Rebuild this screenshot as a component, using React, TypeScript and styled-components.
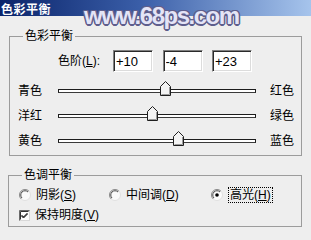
import styled, { createGlobalStyle } from "styled-components";

const GlobalStyle = createGlobalStyle`
  body {
    margin: 0;
    background: #eeeeee;
  }
`;

const balance = [
  { left: "青色", right: "红色", value: 10 },
  { left: "洋红", right: "绿色", value: -4 },
  { left: "黄色", right: "蓝色", value: 23 },
];

const TRACK_WIDTH = 196;

const Thumb = () => (
  <svg width="11" height="15" viewBox="0 0 11 15">
    <path
      d="M5.5 0.5 L10.5 5.5 L10.5 14.5 L0.5 14.5 L0.5 5.5 Z"
      fill="#f3f3f3"
      stroke="#1e1e1e"
    />
    <path d="M1.5 13.5 L9.5 13.5 L9.5 6" fill="none" stroke="#9a9a9a" />
  </svg>
);

const RadioMark = ({ checked }: { checked?: boolean }) => (
  <svg width="12" height="12" viewBox="0 0 12 12">
    <circle cx="6" cy="6" r="5.5" fill="#fbfbfb" stroke="#e0e0e0" />
    <path d="M2.1 9.9 A5.5 5.5 0 0 1 9.9 2.1" fill="none" stroke="#8a8a8a" />
    <path d="M3 9 A4.2 4.2 0 0 1 9 3" fill="none" stroke="#4a4a4a" />
    {checked && <circle cx="6" cy="6" r="1.8" fill="#000" />}
  </svg>
);

const CheckMark = () => (
  <svg width="11" height="11" viewBox="0 0 11 11">
    <rect x="0.5" y="0.5" width="10" height="10" fill="#fff" stroke="#d8d8d8" />
    <path d="M0.5 10.5 V0.5 H10.5" fill="none" stroke="#6a6a6a" />
    <path d="M1.5 9.5 V1.5 H9.5" fill="none" stroke="#333" />
    <path d="M2.5 5 L4.5 7 L8.5 3 M2.5 6 L4.5 8 L8.5 4" fill="none" stroke="#000" />
  </svg>
);

const App = () => {
  return (
    <Window>
      <GlobalStyle />
      <TitleBar>色彩平衡</TitleBar>
      <Watermark>www.68ps.com</Watermark>

      <Group $left={9} $top={13}>
        <Legend>色彩平衡</Legend>
        <LevelRow>
          <LevelLabel>
            色阶(<U>L</U>):
          </LevelLabel>
          <Inputs>
            <Field readOnly value="+10" />
            <Field readOnly value="-4" />
            <Field readOnly value="+23" />
          </Inputs>
        </LevelRow>
        <Sliders>
          {balance.map((row) => (
            <SliderRow key={row.left}>
              <SideLabel>{row.left}</SideLabel>
              <Track>
                <ThumbHolder
                  style={{ left: ((row.value + 100) / 200) * TRACK_WIDTH - 6.5 }}
                >
                  <Thumb />
                </ThumbHolder>
              </Track>
              <SideLabel>{row.right}</SideLabel>
            </SliderRow>
          ))}
        </Sliders>
      </Group>

      <Group $left={8} $top={12}>
        <Legend>色调平衡</Legend>
        <ToneRow>
          <Option $width={90}>
            <RadioMark />
            <span>
              阴影(<U>S</U>)
            </span>
          </Option>
          <Option $width={102}>
            <RadioMark />
            <span>
              中间调(<U>D</U>)
            </span>
          </Option>
          <Option>
            <RadioMark checked />
            <Focused>
              高光(<U>H</U>)
            </Focused>
          </Option>
        </ToneRow>
        <CheckRow>
          <Option>
            <CheckMark />
            <span>
              保持明度(<U>V</U>)
            </span>
          </Option>
        </CheckRow>
      </Group>
    </Window>
  );
};

const Window = styled.div`
  position: relative;
  width: 311px;
  height: 240px;
  overflow: hidden;
  background: #eeeeee;
  font-family: "Liberation Sans", "Noto Sans CJK SC", sans-serif;
  font-size: 12px;
  color: #000;
  display: flex;
  flex-direction: column;
`;

const TitleBar = styled.div`
  height: 16px;
  flex-shrink: 0;
  display: flex;
  align-items: center;
  padding-left: 1px;
  background: linear-gradient(to right, #0a246a 0%, #3a5ea8 45%, #a6c4ec 100%);
  color: #fff;
  font-weight: bold;
  font-size: 12px;
  letter-spacing: 0.5px;
`;

const Watermark = styled.div`
  position: absolute;
  left: 84px;
  top: 4px;
  font-family: "Liberation Sans", sans-serif;
  font-weight: bold;
  font-size: 24px;
  line-height: 24px;
  letter-spacing: -1.5px;
  color: #e4e4f6;
  text-shadow: 1.5px 0 #5e5e8c, -1.5px 0 #5e5e8c, 0 1.5px #5e5e8c,
    0 -1.5px #5e5e8c, 1px 1px #5e5e8c, -1px -1px #5e5e8c, 1px -1px #5e5e8c,
    -1px 1px #5e5e8c;
`;

const Group = styled.fieldset<{ $left: number; $top: number }>`
  margin: ${({ $top }) => $top}px 9px 0 ${({ $left }) => $left}px;
  padding: 0;
  border: 1px solid #9c9c9c;
  min-inline-size: 0;
  display: flex;
  flex-direction: column;
`;

const Legend = styled.legend`
  margin-left: 13px;
  padding: 0 2px;
  line-height: 14px;
  height: 14px;
`;

const LevelRow = styled.div`
  display: flex;
  align-items: center;
  padding: 7px 0 0 48px;
`;

const LevelLabel = styled.span`
  width: 55px;
  line-height: 22px;
`;

const Inputs = styled.div`
  display: flex;
  gap: 9.5px;
`;

const Field = styled.input`
  width: 40px;
  height: 22px;
  box-sizing: border-box;
  margin: 0;
  padding: 0 0 0 2px;
  border: 1px solid;
  border-color: #808080 #ffffff #ffffff #808080;
  box-shadow: inset 1px 1px 0 #2a2a2a, inset -1px -1px 0 #dcdcdc;
  background: #fff;
  font-family: "Liberation Sans", sans-serif;
  font-size: 13px;
  color: #000;
  outline: none;
`;

const Sliders = styled.div`
  display: flex;
  flex-direction: column;
  padding: 6px 0 2px 8px;
`;

const SliderRow = styled.div`
  height: 25px;
  display: flex;
  align-items: center;
`;

const SideLabel = styled.span`
  width: 40px;
  line-height: 14px;
  &:last-child {
    width: auto;
    margin-left: 14px;
  }
`;

const Track = styled.div`
  position: relative;
  width: ${TRACK_WIDTH}px;
  height: 2px;
  background: #fff;
  border: 1px solid #1c1c1c;
  border-bottom-color: #3a3a3a;
`;

const ThumbHolder = styled.div`
  position: absolute;
  top: -9px;
  display: flex;
`;

const ToneRow = styled.div`
  display: flex;
  align-items: center;
  height: 16px;
  padding: 5px 0 0 10px;
`;

const CheckRow = styled.div`
  display: flex;
  align-items: center;
  height: 16px;
  padding: 4px 0 3px 10px;
`;

const Option = styled.div<{ $width?: number }>`
  display: flex;
  align-items: center;
  gap: 5px;
  width: ${({ $width }) => ($width ? `${$width}px` : "auto")};
  line-height: 14px;
`;

const Focused = styled.span`
  border: 1px dotted #000;
  padding: 0 1px;
`;

const U = styled.span`
  text-decoration: underline;
`;

export default App;
